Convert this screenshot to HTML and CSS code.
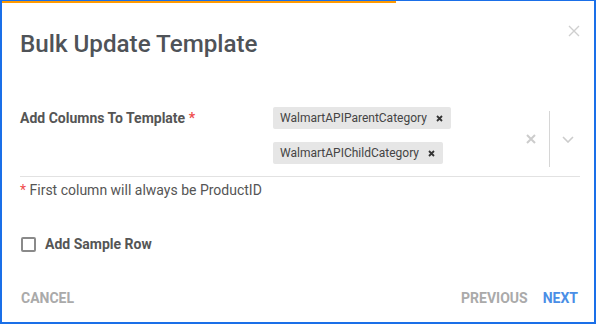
FILE: index.html
```html
<!DOCTYPE html>
<html lang="en">

<head>
    <meta charset="UTF-8">
    <meta name="viewport" content="width=device-width, initial-scale=1.0">
    <title>Bulk Update Template</title>
    <link rel="stylesheet" href="styles.css">
</head>

<body>
    <div class="dialog">
        <div class="progress"><span class="bar"></span></div>

        <div class="head">
            <h1 class="title">Bulk Update Template</h1>
            <a href="javascript:;" class="close">
                <svg width="12" height="12" viewBox="0 0 12 12"><path d="M1 1L11 11M11 1L1 11" stroke="#cfcfcf" stroke-width="1.4" fill="none"/></svg>
            </a>
        </div>

        <div class="field">
            <label class="label">Add Columns To Template <em>*</em></label>
            <div class="select">
                <div class="chips">
                    <span class="chip">WalmartAPIParentCategory
                        <svg width="7" height="7" viewBox="0 0 7 7"><path d="M1 1L6 6M6 1L1 6" stroke="#333" stroke-width="1.8" fill="none"/></svg>
                    </span>
                    <span class="chip">WalmartAPIChildCategory
                        <svg width="7" height="7" viewBox="0 0 7 7"><path d="M1 1L6 6M6 1L1 6" stroke="#333" stroke-width="1.8" fill="none"/></svg>
                    </span>
                </div>
                <div class="tools">
                    <span class="tool">
                        <svg width="10" height="10" viewBox="0 0 10 10"><path d="M1 1L9 9M9 1L1 9" stroke="#cccccc" stroke-width="2" fill="none"/></svg>
                    </span>
                    <span class="sep"></span>
                    <span class="tool">
                        <svg width="12" height="7" viewBox="0 0 12 7"><path d="M1 1L6 6L11 1" stroke="#cccccc" stroke-width="1.6" fill="none"/></svg>
                    </span>
                </div>
            </div>
        </div>

        <p class="note"><em>*</em> First column will always be ProductID</p>

        <label class="check">
            <span class="box"></span>
            Add Sample Row
        </label>

        <div class="foot">
            <a href="javascript:;" class="btn">Cancel</a>
            <div class="steps">
                <a href="javascript:;" class="btn">Previous</a>
                <a href="javascript:;" class="btn next">Next</a>
            </div>
        </div>
    </div>
</body>

</html>
```

FILE: styles.css
```css
* {
    margin: 0;
    padding: 0;
    box-sizing: border-box;
}

a {
    text-decoration: none;
}

body {
    font-family: Roboto, "Liberation Sans", sans-serif;
    background-color: #fff;
}

.dialog {
    display: flex;
    flex-direction: column;
    width: 596px;
    height: 324px;
    padding: 0 14px 0 18px;
    border: 2px solid #1a6fe8;
    border-top-width: 1px;
    background-color: #fff;
}

.progress {
    height: 2px;
    margin: 0 -14px 0 -18px;
}

.progress .bar {
    display: block;
    width: 66.5%;
    height: 2px;
    background-color: #ff9a00;
}

.head {
    display: flex;
    justify-content: space-between;
    align-items: flex-start;
}

.title {
    margin-top: 27px;
    font-size: 24.2px;
    line-height: 28px;
    font-weight: 500;
    color: #4f5358;
}

.close {
    display: block;
    margin-top: 22px;
    line-height: 0;
}

.field {
    display: flex;
    align-items: flex-start;
    padding: 49px 0 9px;
    border-bottom: 1px solid #e2e2e2;
}

.label {
    width: 253px;
    flex-shrink: 0;
    font-size: 14px;
    line-height: 22px;
    font-weight: 700;
    color: #555;
}

em {
    font-style: normal;
    color: #ef4d4d;
}

.select {
    display: flex;
    flex: 1;
}

.chips {
    display: flex;
    flex-direction: column;
    align-items: flex-start;
    gap: 13px;
    flex: 1;
}

.chip {
    display: flex;
    align-items: center;
    gap: 9px;
    height: 22px;
    padding: 0 8px 0 7px;
    border-radius: 2px;
    background-color: #e6e6e6;
    font-size: 12px;
    color: #444;
}

.tools {
    display: flex;
    align-items: center;
    margin-top: 4px;
    padding-right: 2px;
}

.tool {
    display: flex;
    justify-content: center;
    align-items: center;
    width: 20px;
    height: 56px;
}

.sep {
    width: 1px;
    height: 56px;
    margin: 0 8px;
    background-color: #d6d6d6;
}

.note {
    margin-top: 4px;
    font-size: 14px;
    line-height: 18px;
    color: #555;
}

.check {
    display: flex;
    align-items: center;
    gap: 9px;
    margin-top: 37px;
    font-size: 14px;
    line-height: 16px;
    font-weight: 700;
    color: #555;
}

.check .box {
    width: 15px;
    height: 15px;
    margin-left: 1px;
    border: 2px solid #8a8a8a;
    border-radius: 2px;
}

.foot {
    display: flex;
    justify-content: space-between;
    align-items: center;
    margin-top: auto;
    padding-bottom: 16px;
}

.steps {
    display: flex;
    gap: 14px;
    padding-right: 2px;
}

.btn {
    margin-left: 1px;
    font-size: 14px;
    line-height: 16px;
    font-weight: 700;
    text-transform: uppercase;
    color: #aaa;
}

.btn.next {
    color: #4a8ee6;
}
```
